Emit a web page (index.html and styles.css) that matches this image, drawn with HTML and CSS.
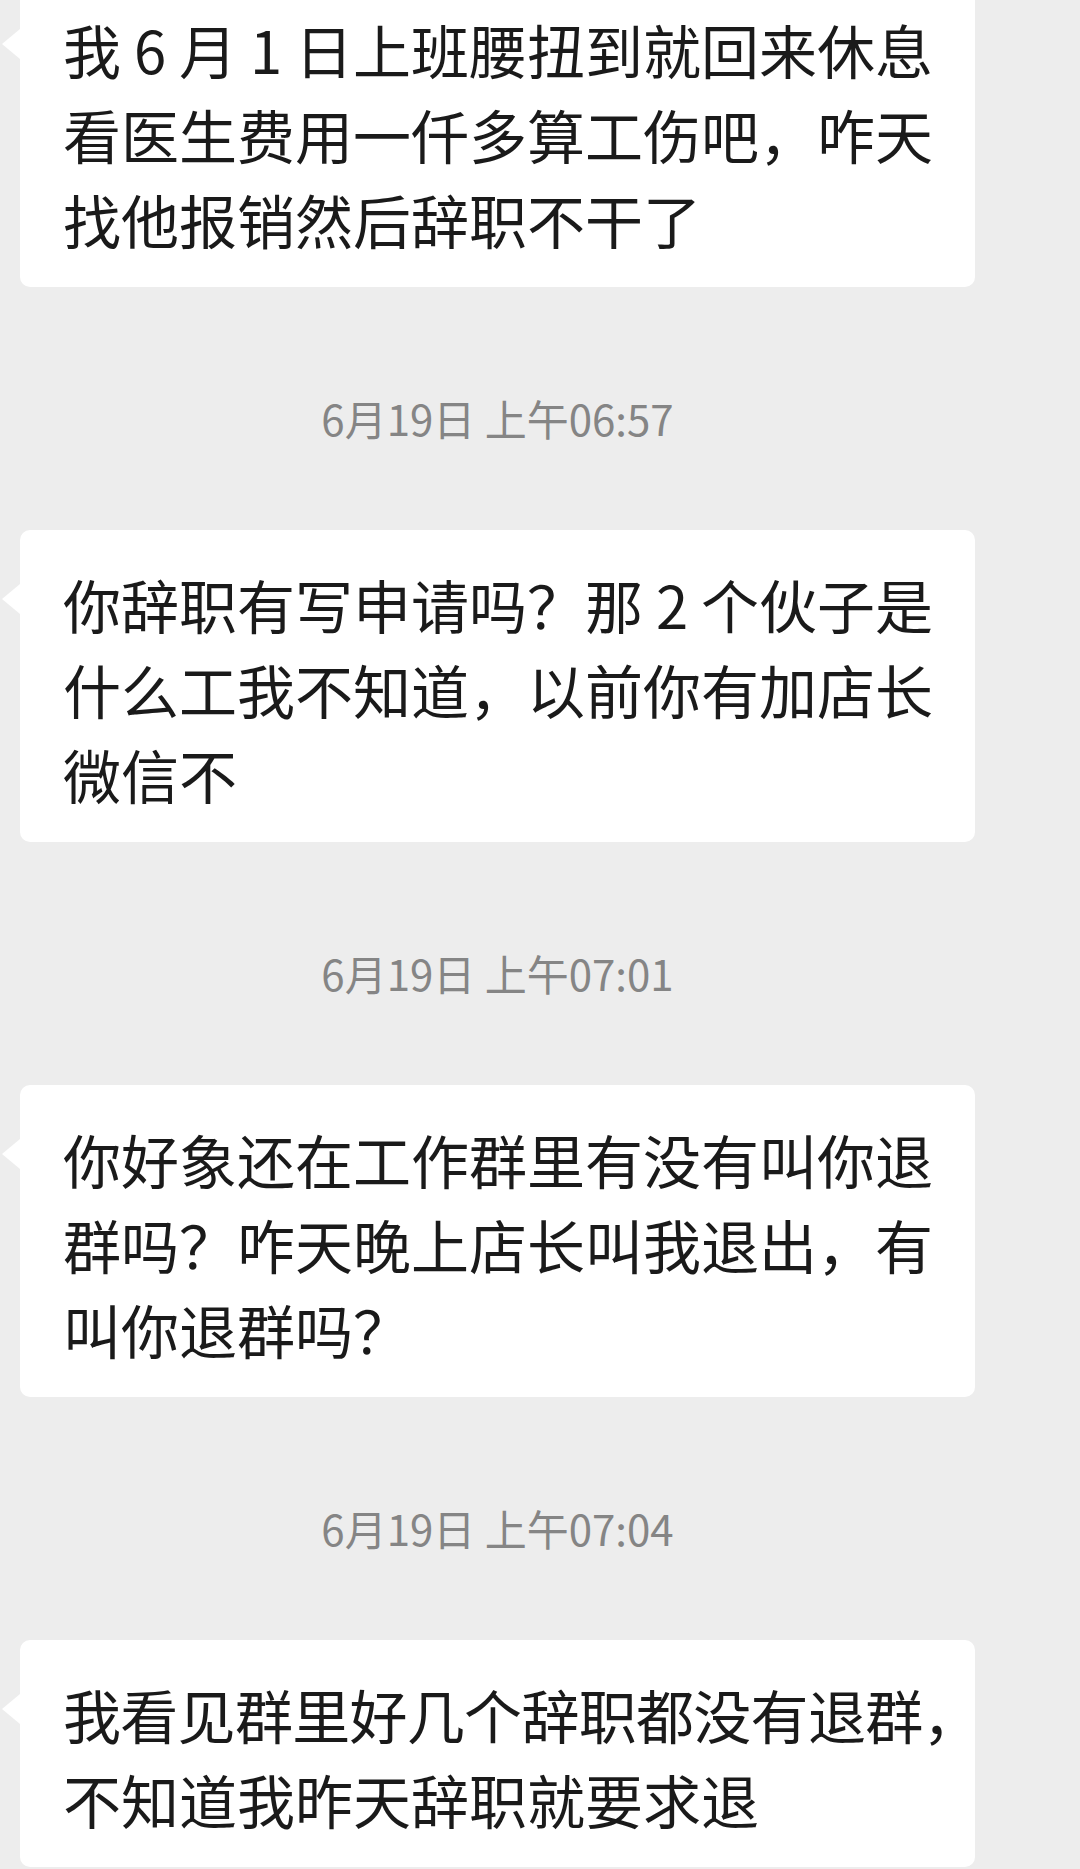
FILE: index.html
```html
<!DOCTYPE html>
<html lang="zh-CN">
<head>
<meta charset="utf-8">
<title>聊天记录</title>
<link rel="stylesheet" href="styles.css">
</head>
<body>
<div class="chat">
  <div class="bubble">我<span class="fw">6</span>月<span class="fw">1</span>日上班腰扭到就回来休息<br>看医生费用一仟多算工伤吧，咋天<br>找他报销然后辞职不干了</div>
  <div class="time">6月19日 上午06:57</div>
  <div class="bubble">你辞职有写申请吗？那<span class="fw">2</span>个伙子是<br>什么工我不知道，以前你有加店长<br>微信不</div>
  <div class="time">6月19日 上午07:01</div>
  <div class="bubble">你好象还在工作群里有没有叫你退<br>群吗？咋天晚上店长叫我退出，有<br>叫你退群吗？</div>
  <div class="time">6月19日 上午07:04</div>
  <div class="bubble"><span class="tight">我看见群里好几个辞职都没有退群</span><span class="half">，</span><br>不知道我昨天辞职就要求退</div>
</div>
</body>
</html>
```
FILE: styles.css
```css
html, body {
  margin: 0;
  padding: 0;
  background: #ededed;
}
body {
  width: 1080px;
  height: 1869px;
  overflow: hidden;
  font-family: "Noto Sans CJK SC", "Noto Sans", sans-serif;
}
.chat {
  display: flex;
  flex-direction: column;
  width: 955px;
  margin-left: 20px;
  margin-top: -25px;
}
.bubble {
  position: relative;
  background: #ffffff;
  border-radius: 10px;
  padding: 32px 20px 25px 43px;
  font-size: 58px;
  line-height: 85px;
  color: #1a1a1a;
  white-space: nowrap;
}
.bubble::before {
  content: "";
  position: absolute;
  left: -18px;
  top: 54px;
  border-right: 18px solid #ffffff;
  border-top: 15px solid transparent;
  border-bottom: 15px solid transparent;
}
.fw {
  display: inline-block;
  width: 1em;
  text-align: center;
}
.tight {
  letter-spacing: -0.7px;
}
.half {
  font-feature-settings: "halt";
}
.time {
  text-align: center;
  font-size: 42px;
  line-height: 60px;
  color: #858585;
  padding: 101px 0 82px;
}
```
